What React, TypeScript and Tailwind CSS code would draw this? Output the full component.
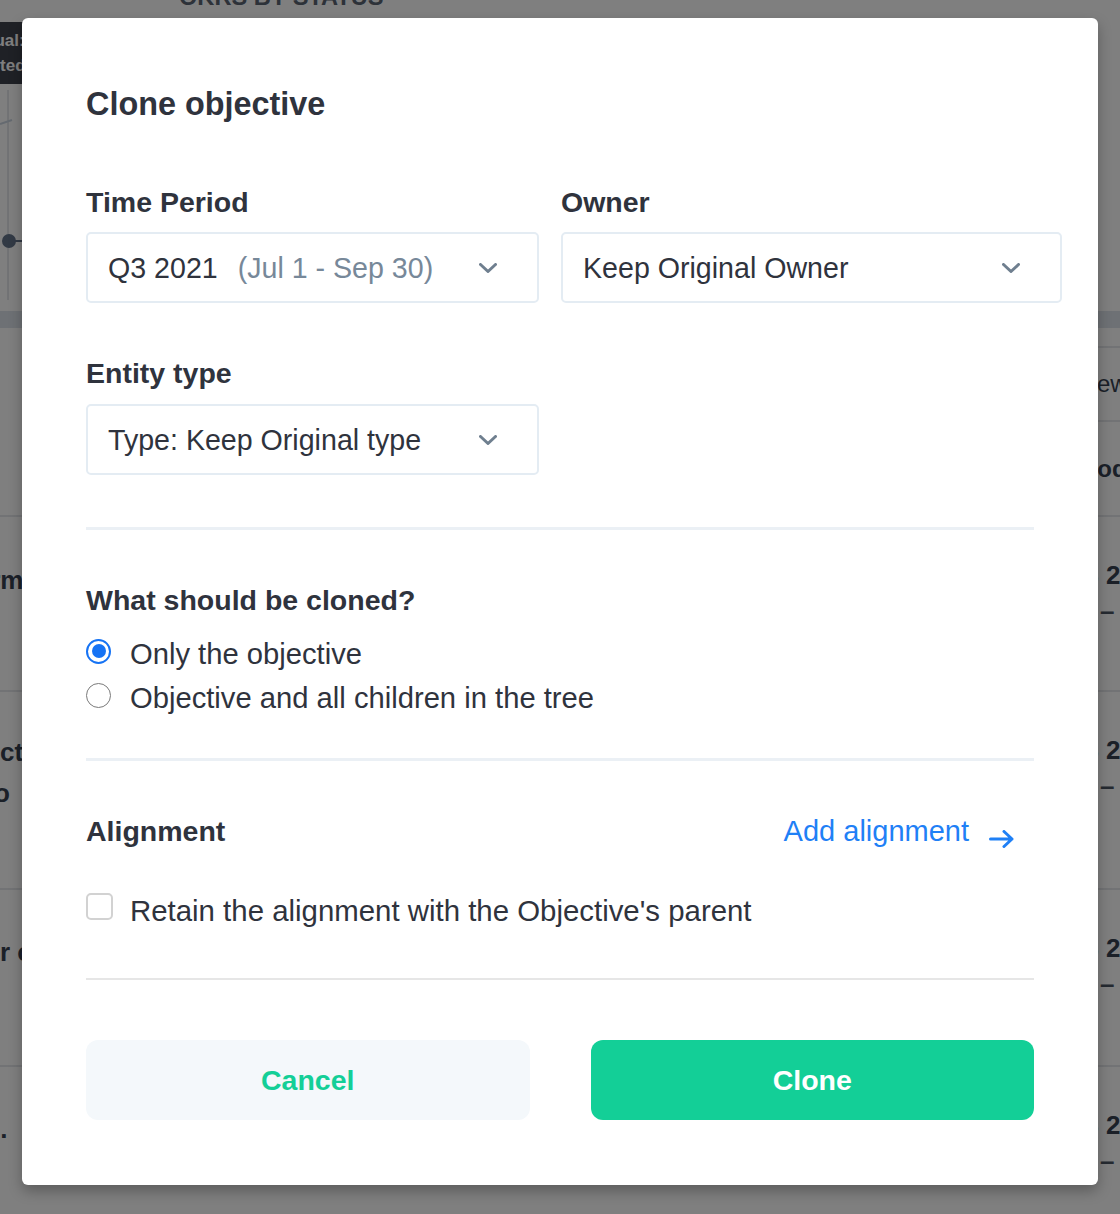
import React from 'react';

function Chevron() {
  return (
    <svg width="18" height="10" viewBox="0 0 18 10" fill="none" className="shrink-0">
      <polyline
        points="1.5,1.5 9,8.5 16.5,1.5"
        stroke="#6f7f8f"
        strokeWidth="3"
        strokeLinecap="round"
        strokeLinejoin="round"
      />
    </svg>
  );
}

function ArrowRight() {
  return (
    <svg width="25" height="18" viewBox="0 0 25 18" fill="none" className="shrink-0">
      <path
        d="M1.5 9h21.5M15 1.5L23 9l-8 7.5"
        stroke="#1f80f6"
        strokeWidth="3"
        strokeLinecap="round"
        strokeLinejoin="round"
      />
    </svg>
  );
}

function Select({ children }: { children: React.ReactNode }) {
  return (
    <div className="flex h-[71px] items-center justify-between rounded-[5px] border-2 border-[#e4ecf3] bg-white pl-[20px] pr-[40px]">
      <div className="flex items-center whitespace-nowrap text-[28.6px] leading-[36px] text-[#2f333d]">
        {children}
      </div>
      <Chevron />
    </div>
  );
}

function Radio({ checked, label }: { checked?: boolean; label: string }) {
  return (
    <div className="flex h-[44px] items-center gap-[19px]">
      {checked ? (
        <div className="flex h-[25px] w-[25px] items-center justify-center rounded-full border-[2.5px] border-[#1673f4]">
          <div className="h-[14px] w-[14px] rounded-full bg-[#1673f4]" />
        </div>
      ) : (
        <div className="h-[25px] w-[25px] rounded-full border-[1.5px] border-[#7a7a7a] bg-white" />
      )}
      <span className="mt-[6px] text-[29.2px] leading-[36px] text-[#2f333d]">{label}</span>
    </div>
  );
}

function TableRow({
  height,
  left,
  leftShift,
}: {
  height: string;
  left: React.ReactNode;
  leftShift?: string;
}) {
  return (
    <div className={`flex ${height} items-start justify-between border-t-2 border-[#e5e7eb] pt-[40px]`}>
      <div className={`whitespace-nowrap text-[26px] font-bold leading-[41px] text-[#374151] ${leftShift ?? ''}`}>
        {left}
      </div>
      <div className="w-[56px] whitespace-nowrap text-[26px] font-bold leading-[36px] text-[#374151]">
        <div>Q3 2021</div>
        <div className="pl-[36px] text-[#4b5563]">–</div>
      </div>
    </div>
  );
}

export default function App() {
  return (
    <div className="relative h-[1214px] w-full overflow-hidden bg-white font-['Liberation_Sans',Arial,sans-serif]">
      {/* page behind the dialog */}
      <div className="flex flex-col">
        <div className="relative h-[311px]">
          <h2 className="-mt-[17px] pl-[179px] text-[23.6px] font-bold uppercase leading-[28px] text-[#5b6472]">
            OKRs by status
          </h2>
          <svg className="absolute left-0 top-0" width="1120" height="311" fill="none">
            <line x1="8" y1="90" x2="8" y2="300" stroke="#e5e7eb" strokeWidth="2" />
            <line x1="0" y1="124" x2="12" y2="120" stroke="#cbd5e1" strokeWidth="2" />
            <line x1="9" y1="241" x2="80" y2="241" stroke="#64748b" strokeWidth="2" />
            <circle cx="9" cy="241" r="7" fill="#64748b" />
          </svg>
          <div className="absolute left-[-45px] top-[22px] h-[62px] w-[180px] rounded-[4px] bg-[#3f434d] px-[12px] pt-[6px] text-[17px] font-bold leading-[25px] text-white">
            <div>Actual:</div>
            <div>Started</div>
          </div>
        </div>
        <div className="h-[17px] bg-[#dde2ea]" />
        <div className="flex h-[187px] justify-end">
          <div className="w-[120px] pt-[18px]">
            <div className="flex h-[74px] items-center border-t-2 border-[#e5e7eb] pl-[76px] whitespace-nowrap text-[24px] text-[#374151]">
              View
            </div>
            <div className="flex h-[95px] items-center border-t-2 border-[#e5e7eb] pl-[52px] whitespace-nowrap text-[24px] font-bold text-[#374151]">
              Period
            </div>
          </div>
        </div>
        <TableRow height="h-[175px]" leftShift="-ml-[82px] mt-[3px]" left="Platform" />
        <TableRow
          height="h-[198px]"
          left={
            <>
              <div className="-ml-[75px]">Product,</div>
              <div className="-ml-[48px]">Intro</div>
            </>
          }
        />
        <TableRow height="h-[177px]" leftShift="-ml-[68px] mt-[2px]" left="Faster checkout" />
        <TableRow height="h-[160px]" leftShift="-ml-[72px] mt-[2px]" left="churn." />
      </div>

      {/* backdrop */}
      <div className="absolute inset-0 bg-black/50" />

      {/* dialog */}
      <div className="absolute inset-0 pl-[22px] pt-[18px]">
        <div className="flex w-[1076px] flex-col rounded-[6px] bg-white px-[64px] pb-[65px] pt-[66px] shadow-[0_6px_14px_rgba(0,0,0,0.28)]">
          <h1 className="text-[32.4px] font-bold leading-[40px] text-[#2f333d]">Clone objective</h1>

          <div className="mt-[60px] grid w-[976px] grid-cols-[453px_501px] gap-x-[22px]">
            <div>
              <div className="mb-[12px] text-[28.5px] font-bold leading-[36px] text-[#2f333d]">Time Period</div>
              <Select>
                <span>Q3 2021</span>
                <span className="ml-[20px] text-[#778899]">(Jul 1 - Sep 30)</span>
              </Select>
            </div>
            <div>
              <div className="mb-[12px] text-[28.5px] font-bold leading-[36px] text-[#2f333d]">Owner</div>
              <Select>Keep Original Owner</Select>
            </div>
          </div>

          <div className="mt-[52px] w-[453px]">
            <div className="mb-[13px] text-[28.5px] font-bold leading-[36px] text-[#2f333d]">Entity type</div>
            <Select>Type: Keep Original type</Select>
          </div>

          <div className="mt-[52px] h-[3px] bg-[#ebf0f5]" />

          <div className="mt-[52px] text-[28.5px] font-bold leading-[36px] text-[#2f333d]">
            What should be cloned?
          </div>
          <div className="mt-[11px] flex flex-col">
            <Radio checked label="Only the objective" />
            <Radio label="Objective and all children in the tree" />
          </div>

          <div className="mt-[41px] h-[3px] bg-[#ebf0f5]" />

          <div className="mt-[52px] flex items-center justify-between">
            <div className="text-[28.5px] font-bold leading-[36px] text-[#2f333d]">Alignment</div>
            <button className="flex items-center gap-[20px] pr-[20px] text-[29px] leading-[36px] text-[#1f80f6]">
              Add alignment
              <span className="mt-[16px]">
                <ArrowRight />
              </span>
            </button>
          </div>

          <div className="mt-[44px] flex items-start gap-[17px]">
            <div className="h-[27px] w-[27px] shrink-0 rounded-[5px] border-2 border-[#d2d2d2] bg-white" />
            <span className="text-[29.4px] leading-[36px] text-[#2f333d]">
              Retain the alignment with the Objective's parent
            </span>
          </div>

          <div className="mt-[49px] h-[2px] bg-[#e6e6e6]" />

          <div className="mt-[60px] grid grid-cols-2 gap-[61px]">
            <button className="h-[80px] rounded-[12px] bg-[#f4f8fb] text-[28.5px] font-bold text-[#13cf97]">
              Cancel
            </button>
            <button className="h-[80px] rounded-[12px] bg-[#13cf97] text-[28.5px] font-bold text-white">
              Clone
            </button>
          </div>
        </div>
      </div>
    </div>
  );
}
